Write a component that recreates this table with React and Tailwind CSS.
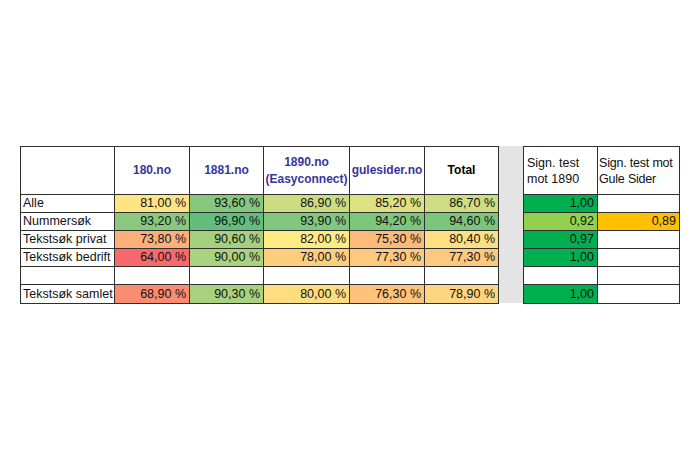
const rows = [
  { label: "Alle", vals: [["81,00 %", "bg-[#FFE483]"], ["93,60 %", "bg-[#86C87D]"], ["86,90 %", "bg-[#CCDC81]"], ["85,20 %", "bg-[#DEE182]"], ["86,70 %", "bg-[#CEDD81]"]], s1: ["1,00", "bg-[#00B050]"], s2: null },
  { label: "Nummersøk", vals: [["93,20 %", "bg-[#8AC97D]"], ["96,90 %", "bg-[#63BE7B]"], ["93,90 %", "bg-[#82C77D]"], ["94,20 %", "bg-[#7FC67D]"], ["94,60 %", "bg-[#7BC57C]"]], s1: ["0,92", "bg-[#92D050]"], s2: ["0,89", "bg-[#FFC000]"] },
  { label: "Tekstsøk privat", vals: [["73,80 %", "bg-[#FCB079]"], ["90,60 %", "bg-[#A5D17F]"], ["82,00 %", "bg-[#FFEB84]"], ["75,30 %", "bg-[#FCBB7B]"], ["80,40 %", "bg-[#FEDF82]"]], s1: ["0,97", "bg-[#00B050]"], s2: null },
  { label: "Tekstsøk bedrift", vals: [["64,00 %", "bg-[#F8696B]"], ["90,00 %", "bg-[#ABD37F]"], ["78,00 %", "bg-[#FDCE7E]"], ["77,30 %", "bg-[#FDC97E]"], ["77,30 %", "bg-[#FDC97E]"]], s1: ["1,00", "bg-[#00B050]"], s2: null },
  { label: "", vals: null, s1: null, s2: null },
  { label: "Tekstsøk samlet", vals: [["68,90 %", "bg-[#FA8C72]"], ["90,30 %", "bg-[#A8D27F]"], ["80,00 %", "bg-[#FEDD81]"], ["76,30 %", "bg-[#FDC27C]"], ["78,90 %", "bg-[#FED580]"]], s1: ["1,00", "bg-[#00B050]"], s2: null },
];

const heads = [
  { t: ["180.no"], c: "text-[#36369a]" },
  { t: ["1881.no"], c: "text-[#36369a]" },
  { t: ["1890.no", "(Easyconnect)"], c: "text-[#36369a]" },
  { t: ["gulesider.no"], c: "text-[#36369a]" },
  { t: ["Total"], c: "text-black" },
];

export default function App() {
  return (
    <div
      className="w-[700px] h-[450px] bg-white pt-[146px] pl-[20px] flex items-start text-[#111]"
      style={{ fontFamily: '"Liberation Sans", Arial, sans-serif' }}
    >
      <div className="grid grid-cols-[93px_74px_73px_85px_74px_73px] grid-rows-[47px_17px_17px_17px_17px_17px_18px] gap-px p-px bg-[#2e2e2e]">
        <div className="bg-white" />
        {heads.map((h, i) => (
          <div key={i} className={`bg-white flex flex-col items-center justify-center font-bold text-[12px] leading-[17px] ${h.c}`}>
            {h.t.map((l, j) => (
              <span key={j}>{l}</span>
            ))}
          </div>
        ))}
        {rows.map((r, ri) => (
          <>
            <div key={`l${ri}`} className="bg-white flex items-center pl-[2px] text-[12.5px] leading-none whitespace-nowrap">{r.label}</div>
            {r.vals
              ? r.vals.map(([v, c], ci) => (
                  <div key={`v${ri}-${ci}`} className={`${c} flex items-center justify-end pr-[3px] text-[12.5px] leading-none`}>{v}</div>
                ))
              : [0, 1, 2, 3, 4].map((ci) => <div key={`e${ci}`} className="bg-white" />)}
          </>
        ))}
      </div>
      <div className="w-[24px] h-[157px] bg-[#e4e4e4]" />
      <div className="grid grid-cols-[73px_81px] grid-rows-[47px_17px_17px_17px_17px_17px_18px] gap-px p-px bg-[#2e2e2e]">
        <div className="bg-white flex items-center pl-[3px] text-[12.5px] leading-[16px]">
          <span>Sign. test<br />mot 1890</span>
        </div>
        <div className="bg-white flex items-center pl-[1px] text-[12.5px] leading-[16px] whitespace-nowrap tracking-[-0.2px]">
          <span>Sign. test mot<br />Gule Sider</span>
        </div>
        {rows.map((r, ri) => (
          <>
            <div key={`a${ri}`} className={`${r.s1 ? r.s1[1] : "bg-white"} flex items-center justify-end pr-[3px] text-[12.5px] leading-none`}>{r.s1 ? r.s1[0] : ""}</div>
            <div key={`b${ri}`} className={`${r.s2 ? r.s2[1] : "bg-white"} flex items-center justify-end pr-[3px] text-[12.5px] leading-none`}>{r.s2 ? r.s2[0] : ""}</div>
          </>
        ))}
      </div>
    </div>
  );
}
